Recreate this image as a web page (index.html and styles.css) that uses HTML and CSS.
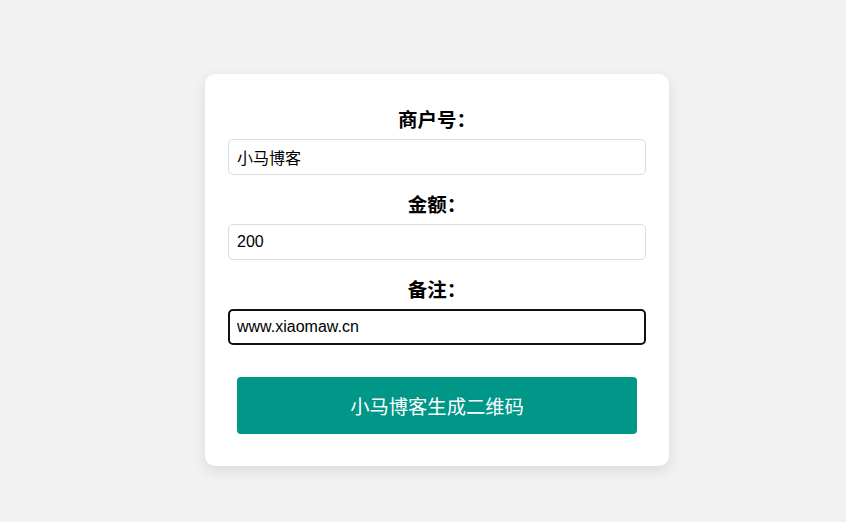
FILE: index.html
```html
<!DOCTYPE html>
<html lang="zh-CN">
<head>
<meta charset="utf-8">
<title>生成二维码</title>
<link rel="stylesheet" href="styles.css">
</head>
<body>
<div class="page">
  <form class="card">
    <div class="group">
      <label class="label" for="merchant">商户号：</label>
      <input class="field" id="merchant" type="text" value="小马博客">
    </div>
    <div class="group">
      <label class="label" for="amount">金额：</label>
      <input class="field" id="amount" type="text" value="200">
    </div>
    <div class="group">
      <label class="label" for="note">备注：</label>
      <input class="field field-active" id="note" type="text" value="www.xiaomaw.cn">
    </div>
    <button class="btn" type="button">小马博客生成二维码</button>
  </form>
</div>
</body>
</html>
```
FILE: styles.css
```css
* { box-sizing: border-box; }
html, body { margin: 0; padding: 0; }
body {
  background: #f2f2f2;
  font-family: "Liberation Sans", Arial, "Noto Sans CJK SC", sans-serif;
  width: 846px;
  height: 522px;
  overflow: hidden;
}
.page {
  display: flex;
  justify-content: center;
  padding: 74px 0 0 28px;
}
.card {
  width: 464px;
  background: #fff;
  border-radius: 10px;
  box-shadow: 0 5px 14px rgba(0, 0, 0, 0.1);
  padding: 33px 23px 32px;
  display: flex;
  flex-direction: column;
}
.group {
  display: flex;
  flex-direction: column;
  margin-bottom: 17px;
}
.label {
  display: block;
  text-align: center;
  font-family: "Noto Sans CJK SC", sans-serif;
  font-weight: bold;
  font-size: 19.5px;
  line-height: 24px;
  color: #000;
  margin-bottom: 8px;
}
.field {
  width: 100%;
  height: 36px;
  border: 1px solid #dcdcdc;
  border-radius: 5px;
  padding: 0 8px;
  font-family: "Liberation Sans", Arial, "Noto Sans CJK SC", sans-serif;
  font-size: 16px;
  color: #000;
  background: #fff;
  outline: none;
}
.field-active {
  border: 2px solid #111;
  padding: 0 7px;
}
.group:last-of-type { margin-bottom: 32px; }
.btn {
  align-self: center;
  width: 400px;
  height: 57px;
  border: none;
  border-radius: 4px;
  background: #009688;
  color: #fff;
  font-family: "Noto Sans CJK SC", sans-serif;
  font-size: 19.3px;
  cursor: pointer;
}
```
